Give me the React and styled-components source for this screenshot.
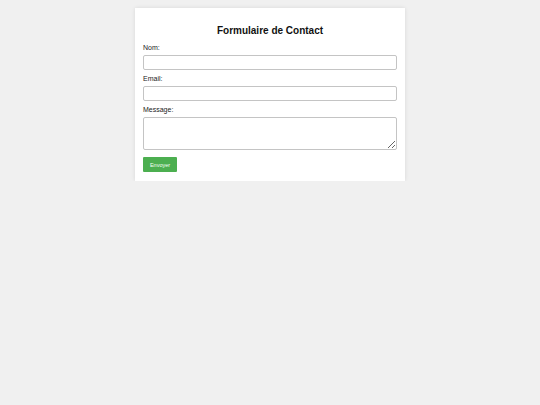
import React from "react";
import styled, { createGlobalStyle } from "styled-components";

const GlobalStyle = createGlobalStyle`
  body {
    margin: 0;
    background-color: #f0f0f0;
    font-family: "Liberation Sans", Arial, sans-serif;
  }
`;

function App() {
  return (
    <Page>
      <GlobalStyle />
      <Card>
        <h2>Formulaire de Contact</h2>
        <form onSubmit={(e) => e.preventDefault()}>
          <Field>
            <label htmlFor="nom">Nom:</label>
            <input id="nom" type="text" />
          </Field>
          <Field>
            <label htmlFor="email">Email:</label>
            <input id="email" type="email" />
          </Field>
          <Field>
            <label htmlFor="message">Message:</label>
            <textarea id="message" />
          </Field>
          <Button type="submit">Envoyer</Button>
        </form>
      </Card>
    </Page>
  );
}
export default App;

const Page = styled.div`
  padding-top: 8px;
  display: flex;
  justify-content: center;
`;

const Card = styled.div`
  width: 270px;
  box-sizing: border-box;
  padding: 8px 8px 9px;
  background-color: #ffffff;
  box-shadow: 0 0 4px rgba(0, 0, 0, 0.1);
  h2 {
    margin: 8px 0 6px;
    font-size: 10px;
    line-height: 14px;
    text-align: center;
    color: #111;
  }
  form {
    margin: 0;
  }
`;

const Field = styled.div`
  margin-bottom: 5px;
  label {
    display: block;
    font-size: 7px;
    line-height: 8px;
    margin-bottom: 3px;
    color: #222;
  }
  input,
  textarea {
    display: block;
    width: 100%;
    box-sizing: border-box;
    height: 15px;
    margin: 0;
    padding: 2px 4px;
    border: 1px solid #c4c4c4;
    border-radius: 2px;
    font-family: inherit;
    font-size: 7px;
    background: #fff;
  }
  textarea {
    height: 33px;
  }
`;

const Button = styled.button`
  display: block;
  width: 34px;
  height: 15px;
  margin-top: 7px;
  padding: 0;
  border: none;
  border-radius: 1px;
  background-color: #4caf50;
  color: #f4fff4;
  font-family: inherit;
  font-size: 5.5px;
  cursor: pointer;
`;
